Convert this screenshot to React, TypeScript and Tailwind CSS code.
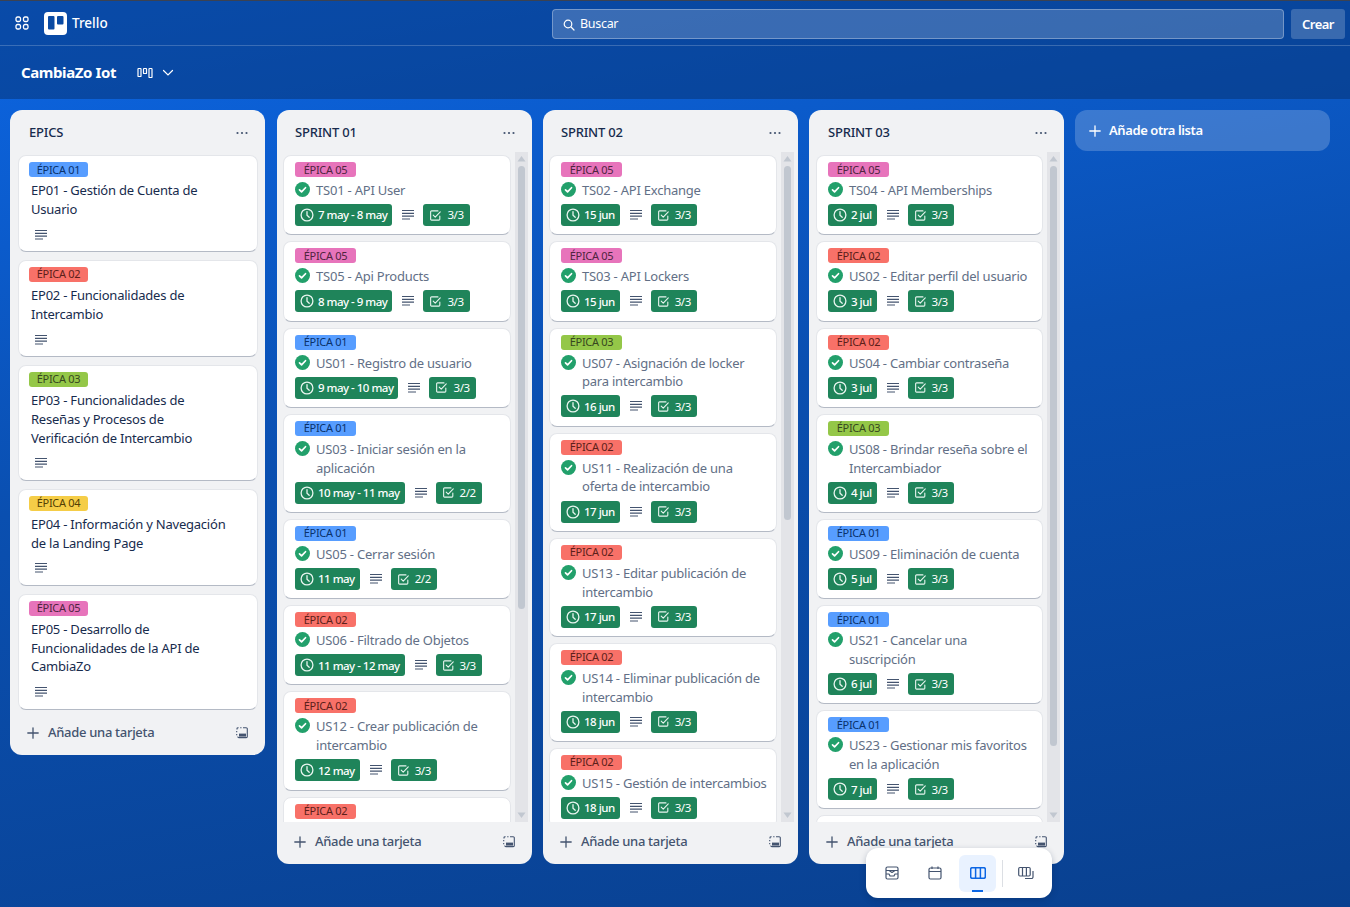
import React from "react";

type L = "b" | "r" | "p" | "g" | "y";
const labelCls: Record<L, string> = {
  b: "bg-[#579dff] text-[#09326c]",
  r: "bg-[#f87168] text-[#5d1f1a]",
  p: "bg-[#e774bb] text-[#50253f]",
  g: "bg-[#94c748] text-[#37471f]",
  y: "bg-[#f5cd47] text-[#533f04]",
};
const labelNum: Record<L, string> = { b: "01", r: "02", g: "03", y: "04", p: "05" };
const labelText = "text-[11px] tracking-[-0.3px] leading-4";

const Desc = () => (
  <svg width="12" height="12" viewBox="0 0 12 12" className="text-[#44546f]">
    <path d="M0 1h12v1.100H0zM0 3.800h12v1.100H0zM0 6.600h12v1.100H0zM0 9.400h8v1.100H0z" fill="currentColor" />
  </svg>
);
const Check = () => (
  <svg width="15" height="15" viewBox="0 0 16 16" className="shrink-0">
    <circle cx="8" cy="8" r="8" fill="#22a06b" />
    <path d="M4.800 8.300l2.200 2.200 4.200-4.400" fill="none" stroke="#fff" strokeWidth="1.800" strokeLinecap="round" strokeLinejoin="round" />
  </svg>
);
const Clock = () => (
  <svg width="14" height="14" viewBox="0 0 14 14" fill="none" stroke="#e8f5ef" strokeWidth="1.300" strokeLinecap="round" className="shrink-0">
    <circle cx="7" cy="7" r="5.900" />
    <path d="M7 3.600V7.300l2.200 2" />
  </svg>
);
const CheckBox = () => (
  <svg width="11" height="11" viewBox="0 0 12 12" fill="none" stroke="#e8f5ef" strokeWidth="1.200" strokeLinecap="round" strokeLinejoin="round" className="shrink-0">
    <path d="M10.700 6.500v3.500a1 1 0 0 1-1 1h-8a1 1 0 0 1-1-1V2a1 1 0 0 1 1-1h7" />
    <path d="M3.500 5.500l2.200 2.200 5.500-5.700" />
  </svg>
);
const Plus = ({ c = "#44546f" }: { c?: string }) => (
  <svg width="12" height="12" viewBox="0 0 12 12" stroke={c} strokeWidth="1.300" strokeLinecap="round">
    <path d="M6 .8v10.400M.8 6h10.400" />
  </svg>
);
const Template = () => (
  <svg width="12" height="12" viewBox="0 0 12 12" fill="none" stroke="#44546f" strokeWidth="1.100">
    <path d="M1 2.400V1.700a1 1 0 0 1 1-1h.6M4.200 .7h1.300M7 .7h3.200a1.100 1.100 0 0 1 1.100 1.100v7.700a1.100 1.100 0 0 1-1.100 1.100H3a1.100 1.100 0 0 1-1.200-1.100M.7 4v1.300M.7 7v1.300" />
    <rect x="3" y="6.600" width="7" height="3" fill="#44546f" stroke="none" />
  </svg>
);

type CardT = { l: L; t: string; d: string; c: string };

const Card = ({ l, t, d, c }: CardT) => (
  <div className="bg-white rounded-lg border border-[#e4e6ea] border-b-[#b4bac5] px-[11px] pt-[6px] pb-[8.200px] shrink-0">
    <div className={`flex h-[15px] w-[61px] items-center justify-center rounded-[3px] ${labelText} ${labelCls[l]}`}>
      ÉPICA {labelNum[l]}
    </div>
    <div className="flex mt-[4px] gap-[6px] text-[13px] tracking-[-0.22px] leading-[18.800px] text-[#626f86]">
      <span className="mt-[1px]"><Check /></span>
      <div className="whitespace-pre">{t}</div>
    </div>
    <div className="flex items-center mt-[4.300px] h-[22px]">
      <div className="flex items-center h-[22px] rounded-[3px] bg-[#1f845a] text-white text-[11.500px] tracking-[-0.5px] font-medium pl-[5px] pr-[5px] gap-[4px] whitespace-nowrap">
        <Clock />
        <span>{d}</span>
      </div>
      <span className="ml-[10px] mr-[9px] flex"><Desc /></span>
      <div className="flex items-center h-[22px] rounded-[3px] bg-[#1f845a] text-white text-[11.500px] tracking-[-0.4px] pl-[7px] pr-[6px] gap-[6px]">
        <CheckBox />
        <span>{c}</span>
      </div>
    </div>
  </div>
);

const Epic = ({ l, lines }: { l: L; lines: string }) => (
  <div className="bg-white rounded-lg border border-[#e4e6ea] border-b-[#b4bac5] pl-[10px] pr-3 pt-[6px] pb-[10.400px] shrink-0">
    <div className={`flex h-[15px] w-[59px] items-center justify-center rounded-[3px] ${labelText} ${labelCls[l]}`}>
      ÉPICA {labelNum[l]}
    </div>
    <div className="text-[13px] tracking-[-0.22px] leading-[18.800px] text-[#172b4d] mt-[4px] ml-[2px] whitespace-pre">{lines}</div>
    <div className="mt-[10px] ml-[6px] h-3 flex"><Desc /></div>
  </div>
);

const Header = ({ t, pl }: { t: string; pl: string }) => (
  <div className={`flex items-center justify-between h-[42px] pt-[3px] pr-[17px] shrink-0 ${pl}`}>
    <span className="text-[13px] tracking-[-0.2px] font-medium text-[#172b4d]">{t}</span>
    <svg width="12" height="4" viewBox="0 0 12 4" fill="#44546f">
      <circle cx="1.500" cy="2" r="1.100" /><circle cx="6" cy="2" r="1.100" /><circle cx="10.500" cy="2" r="1.100" />
    </svg>
  </div>
);

const Footer = ({ extra = "" }: { extra?: string }) => (
  <div className={`flex items-center h-[42px] pb-[2px] pl-[17px] pr-[17px] shrink-0 text-[13px] tracking-[-0.3px] font-medium text-[#44546f] ${extra}`}>
    <Plus />
    <span className="ml-[9px] flex-1">Añade una tarjeta</span>
    <Template />
  </div>
);

const Scroll = ({ end }: { end: string }) => (
  <div className="w-[13px] ml-[4px] mr-[4px] bg-[#e3e4e8] flex flex-col items-center shrink-0 self-stretch">
    <svg width="11" height="8" viewBox="0 0 11 8" className="mt-[3px] shrink-0"><path d="M5.500 1L9.500 6.500H1.500z" fill="#c1c7d0" /></svg>
    <div className={`w-[7px] flex-1 bg-[#c1c7d0] rounded-full mt-[3px] ${end}`} />
    <svg width="11" height="8" viewBox="0 0 11 8" className="mb-[3px] shrink-0"><path d="M5.500 7L9.500 1.500H1.500z" fill="#c1c7d0" /></svg>
  </div>
);

const Sprint = ({ t, cards, last, end, hp, bp }: { t: string; cards: CardT[]; last: L; end: string; hp: string; bp: string }) => (
  <div className="w-[255px] h-[754px] rounded-xl bg-[#f1f2f4] flex flex-col shrink-0">
    <Header t={t} pl={hp} />
    <div className={`flex h-[670px] overflow-hidden ${bp}`}>
      <div className="flex-1 min-w-0 pt-[3px] flex flex-col gap-[6px] overflow-hidden">
        {cards.map((c, i) => <Card key={i} {...c} />)}
        <div className="bg-white rounded-t-lg border border-[#e4e6ea] px-[11px] pt-[6px] h-[40px] shrink-0">
          <div className={`h-[15px] w-[61px] flex items-center justify-center rounded-[3px] ${labelText} ${labelCls[last]}`}>ÉPICA {labelNum[last]}</div>
        </div>
      </div>
      <Scroll end={end} />
    </div>
    <Footer />
  </div>
);

const s1: CardT[] = [
  { l: "p", t: "TS01 - API User", d: "7 may - 8 may", c: "3/3" },
  { l: "p", t: "TS05 - Api Products", d: "8 may - 9 may", c: "3/3" },
  { l: "b", t: "US01 - Registro de usuario", d: "9 may - 10 may", c: "3/3" },
  { l: "b", t: "US03 - Iniciar sesión en la\naplicación", d: "10 may - 11 may", c: "2/2" },
  { l: "b", t: "US05 - Cerrar sesión", d: "11 may", c: "2/2" },
  { l: "r", t: "US06 - Filtrado de Objetos", d: "11 may - 12 may", c: "3/3" },
  { l: "r", t: "US12 - Crear publicación de\nintercambio", d: "12 may", c: "3/3" },
];
const s2: CardT[] = [
  { l: "p", t: "TS02 - API Exchange", d: "15 jun", c: "3/3" },
  { l: "p", t: "TS03 - API Lockers", d: "15 jun", c: "3/3" },
  { l: "g", t: "US07 - Asignación de locker\npara intercambio", d: "16 jun", c: "3/3" },
  { l: "r", t: "US11 - Realización de una\noferta de intercambio", d: "17 jun", c: "3/3" },
  { l: "r", t: "US13 - Editar publicación de\nintercambio", d: "17 jun", c: "3/3" },
  { l: "r", t: "US14 - Eliminar publicación de\nintercambio", d: "18 jun", c: "3/3" },
  { l: "r", t: "US15 - Gestión de intercambios", d: "18 jun", c: "3/3" },
];
const s3: CardT[] = [
  { l: "p", t: "TS04 - API Memberships", d: "2 jul", c: "3/3" },
  { l: "r", t: "US02 - Editar perfil del usuario", d: "3 jul", c: "3/3" },
  { l: "r", t: "US04 - Cambiar contraseña", d: "3 jul", c: "3/3" },
  { l: "g", t: "US08 - Brindar reseña sobre el\nIntercambiador", d: "4 jul", c: "3/3" },
  { l: "b", t: "US09 - Eliminación de cuenta", d: "5 jul", c: "3/3" },
  { l: "b", t: "US21 - Cancelar una\nsuscripción", d: "6 jul", c: "3/3" },
  { l: "b", t: "US23 - Gestionar mis favoritos\nen la aplicación", d: "7 jul", c: "3/3" },
];

const epics: { l: L; t: string }[] = [
  { l: "b", t: "EP01 - Gestión de Cuenta de\nUsuario" },
  { l: "r", t: "EP02 - Funcionalidades de\nIntercambio" },
  { l: "g", t: "EP03 - Funcionalidades de\nReseñas y Procesos de\nVerificación de Intercambio" },
  { l: "y", t: "EP04 - Información y Navegación\nde la Landing Page" },
  { l: "p", t: "EP05 - Desarrollo de\nFuncionalidades de la API de\nCambiaZo" },
];

export default function App() {
  return (
    <div className="relative h-[907px] w-full overflow-hidden flex flex-col bg-[linear-gradient(170deg,#0c66e4_0%,#0a4fb0_45%,#09408f_100%)] font-['Noto_Sans','Open_Sans',sans-serif]">
      <div className="shrink-0 h-[99px] bg-[#062f6e]/50 flex flex-col">
        <div className="h-px bg-[#3b4252] shrink-0" />
        <div className="h-[45px] shrink-0 border-b border-white/20 flex items-center pl-[15px] pr-[5px]">
          <svg width="14" height="14" viewBox="0 0 14 14" fill="none" stroke="#fff" strokeWidth="1.300">
            <rect x="1" y="1" width="4.500" height="4.500" rx="1.500" />
            <rect x="8.500" y="1" width="4.500" height="4.500" rx="1.500" />
            <rect x="1" y="8.500" width="4.500" height="4.500" rx="1.500" />
            <rect x="8.500" y="8.500" width="4.500" height="4.500" rx="1.500" />
          </svg>
          <svg width="23" height="23" viewBox="0 0 23 23" className="ml-[15px]">
            <rect width="23" height="23" rx="4" fill="#fff" />
            <rect x="4" y="4" width="6.500" height="13.500" rx="1" fill="#0a4aa3" />
            <rect x="13" y="4" width="6.500" height="8.500" rx="1" fill="#0a4aa3" />
          </svg>
          <span className="ml-[5px] text-white text-[13.500px] font-medium">Trello</span>
          <div className="ml-auto mt-[2px] w-[732px] h-[30px] rounded-[4px] bg-white/20 border border-white/30 flex items-center pl-[10px] pt-px text-[12.500px] tracking-[-0.3px] text-white">
            <svg width="12" height="12" viewBox="0 0 12 12" fill="none" stroke="#fff" strokeWidth="1.200" strokeLinecap="round">
              <circle cx="5" cy="5" r="3.800" /><path d="M8 8l3 3" />
            </svg>
            <span className="ml-[5px]">Buscar</span>
          </div>
          <div className="ml-[7px] mt-[2px] pt-px w-[54px] h-[30px] rounded-[3px] bg-white/20 flex items-center justify-center text-white text-[13px] tracking-[-0.5px] font-semibold">Crear</div>
        </div>
        <div className="flex-1 flex items-center pl-[21px]">
          <span className="text-white text-[15px] tracking-[-0.4px] font-bold">CambiaZo Iot</span>
          <svg width="16" height="12" viewBox="0 0 16 12" fill="none" stroke="#fff" strokeWidth="1.200" className="ml-[21px]">
            <rect x="1" y="1.500" width="3" height="8" rx=".6" /><rect x="6.500" y="1.500" width="3" height="5" rx=".6" /><rect x="12" y="1.500" width="3" height="9" rx=".6" />
          </svg>
          <svg width="12" height="8" viewBox="0 0 12 8" fill="none" stroke="#fff" strokeWidth="1.200" strokeLinecap="round" className="ml-[9px]">
            <path d="M1.500 1.500L6 6l4.500-4.500" />
          </svg>
        </div>
      </div>

      <div className="flex items-start gap-[11px] pl-[10px] pt-[11px] flex-1">
        <div className="w-[255px] mr-px rounded-xl bg-[#f1f2f4] flex flex-col shrink-0">
          <Header t="EPICS" pl="pl-[19px]" />
          <div className="pl-2 pr-[7px] pt-[3px] flex flex-col gap-[8px]">
            {epics.map((e, i) => <Epic key={i} l={e.l} lines={e.t} />)}
          </div>
          <Footer extra="mt-[3px]" />
        </div>
        <Sprint t="SPRINT 01" cards={s1} last="r" end="mb-[202px]" hp="pl-[18px]" bp="pl-[6px]" />
        <Sprint t="SPRINT 02" cards={s2} last="r" end="mb-[291px]" hp="pl-[18px]" bp="pl-[6px]" />
        <Sprint t="SPRINT 03" cards={s3} last="b" end="mb-[65px]" hp="pl-[19px]" bp="pl-[7px]" />
        <div className="w-[255px] h-[41px] rounded-xl bg-white/20 flex items-center pl-[14px] gap-[8px] text-white text-[13px] tracking-[-0.4px] font-semibold shrink-0">
          <Plus c="#fff" />
          <span>Añade otra lista</span>
        </div>
      </div>

      <div className="absolute left-[866px] top-[848px] w-[186px] h-[50px] rounded-xl bg-white shadow-[0_2px_6px_rgba(9,30,66,0.25)] flex items-center pl-[5px]">
        <div className="w-[42px] h-[37px] flex items-center justify-center">
          <svg width="14" height="14" viewBox="0 0 14 14" fill="none" stroke="#44546f" strokeWidth="1.200" strokeLinejoin="round">
            <rect x="1" y="1" width="12" height="12" rx="1.500" /><path d="M1 4.500h12M1 8h3l1 2h4l1-2h3" /><path d="M4 4.500L7 6.500 10 4.500" />
          </svg>
        </div>
        <div className="w-[46px] h-[37px] pr-[3px] flex items-center justify-center">
          <svg width="14" height="14" viewBox="0 0 14 14" fill="none" stroke="#44546f" strokeWidth="1.200">
            <rect x="1" y="2" width="12" height="11" rx="1.500" /><path d="M1 5.500h12M4 .5v2.500M10 .5v2.500" />
          </svg>
        </div>
        <div className="relative w-[37px] h-[37px] rounded-md bg-[#e9f2ff] flex items-center justify-center">
          <svg width="16" height="12" viewBox="0 0 16 12" fill="none" stroke="#0c66e4" strokeWidth="1.500">
            <rect x=".7" y=".7" width="14.600" height="10.600" rx="1.500" /><path d="M5.600 .7v10.600M10.400 .7v10.600" />
          </svg>
          <div className="absolute bottom-0 left-[13px] w-[11px] h-[1.500px] bg-[#0c66e4]" />
        </div>
        <div className="w-px h-[27px] bg-[#dcdfe4] ml-[6px]" />
        <div className="w-[46px] h-[37px] flex items-center justify-center">
          <svg width="16" height="14" viewBox="0 0 16 14" fill="none" stroke="#44546f" strokeWidth="1.200">
            <rect x=".7" y="1.500" width="11.500" height="8.500" rx="1.200" /><path d="M4.500 1.500v8.500M8.400 1.500v8.500M15 5v6a1.500 1.500 0 0 1-1.500 1.500H7" />
          </svg>
        </div>
      </div>
    </div>
  );
}
